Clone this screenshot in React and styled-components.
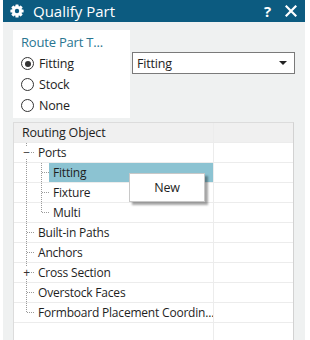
import React from 'react';
import styled, { createGlobalStyle } from 'styled-components';

const GlobalStyle = createGlobalStyle`
	body {
		margin: 0;
		background: #ffffff;
		font-family: "Open Sans", "Noto Sans", sans-serif;
		font-size: 12px;
		letter-spacing: -0.2px;
		color: #1e1e1e;
	}
`;

const treeRows = [
	{ label: 'Ports', guides: ['tee'], expander: '−' },
	{ label: 'Fitting', guides: ['pipe', 'tee'], selected: true },
	{ label: 'Fixture', guides: ['pipe', 'tee'] },
	{ label: 'Multi', guides: ['pipe', 'elbow'] },
	{ label: 'Built-in Paths', guides: ['tee'] },
	{ label: 'Anchors', guides: ['tee'] },
	{ label: 'Cross Section', guides: ['tee'], expander: '+' },
	{ label: 'Overstock Faces', guides: ['tee'] },
	{ label: 'Formboard Placement Coordin...', guides: ['elbow'] },
	{ label: '', guides: [] },
];

const Window = styled.div`
	margin-left: 3px;
	width: 302px;
	height: 340px;
	background: #eff1f1;
	overflow: hidden;
`;

const TitleBar = styled.div`
	height: 22px;
	background: #0c5b80;
	display: flex;
	align-items: center;
	padding: 0 8px 0 7px;
	color: #ffffff;
`;

const Title = styled.div`
	flex: 1;
	margin-left: 9px;
	font-size: 15px;
	letter-spacing: 0;
	line-height: 22px;
`;

const HelpMark = styled.span`
	font-size: 15px;
	font-weight: 700;
	margin-right: 14px;
`;

const Body = styled.div`
	padding: 8px 0 0 10px;
`;

const TopSection = styled.div`
	display: flex;
	align-items: flex-start;
`;

const Group = styled.div`
	width: 117px;
	height: 88px;
	background: #ffffff;
	padding: 3px 0 0 8px;
	box-sizing: border-box;
`;

const GroupTitle = styled.div`
	color: #2a7591;
	font-size: 13px;
	line-height: 18px;
	margin-bottom: 2px;
`;

const RadioRow = styled.div`
	display: flex;
	align-items: center;
	height: 21px;
	gap: 5px;
	font-size: 12.5px;
`;

const Radio = styled.span`
	width: 11px;
	height: 11px;
	border: 1px solid #333333;
	border-radius: 50%;
	display: flex;
	align-items: center;
	justify-content: center;
	background: #ffffff;

	&::after {
		content: '';
		width: 6px;
		height: 6px;
		border-radius: 50%;
		background: ${p => (p.$checked ? '#333333' : 'transparent')};
	}
`;

const Select = styled.div`
	margin: 22px 0 0 2px;
	width: 163px;
	height: 22px;
	box-sizing: border-box;
	border: 1px solid #7a7a7a;
	background: #ffffff;
	display: flex;
	align-items: center;
	padding: 0 7px 0 4px;
	font-size: 12.5px;
`;

const SelectText = styled.span`
	flex: 1;
`;

const Caret = styled.span`
	width: 0;
	height: 0;
	border-left: 4px solid transparent;
	border-right: 4px solid transparent;
	border-top: 4px solid #222222;
`;

const Tree = styled.div`
	position: relative;
	margin-top: 4px;
	width: 281px;
	background: #ffffff;
	border: 1px solid #dcdcdc;
	border-right-color: #d2d2d2;
	box-sizing: border-box;
`;

const Row = styled.div`
	display: grid;
	grid-template-columns: 199px 1fr;
	height: 20px;
	box-sizing: border-box;
	border-bottom: 1px solid #ececec;
	background: ${p => (p.$header ? '#f0f0f0' : '#ffffff')};
`;

const HeaderCell = styled.div`
	padding-left: 8px;
	line-height: 19px;
	font-size: 12.5px;
`;

const NameCell = styled.div`
	display: flex;
	align-items: stretch;
	padding-left: 5px;
`;

const SideCell = styled.div`
	border-left: 1px solid #ececec;
`;

const Guide = styled.span`
	position: relative;
	width: 15px;
	flex-shrink: 0;

	&::before {
		content: '';
		display: ${p => (p.$kind ? 'block' : 'none')};
		position: absolute;
		left: 7px;
		top: 0;
		width: 1px;
		height: ${p => (p.$kind === 'elbow' ? '10px' : '20px')};
		background-image: linear-gradient(to bottom, #9a9a9a 50%, transparent 50%);
		background-size: 1px 2px;
	}

	&::after {
		content: '';
		display: ${p => (p.$kind === 'tee' || p.$kind === 'elbow' ? 'block' : 'none')};
		position: absolute;
		left: 8px;
		top: 9px;
		width: 7px;
		height: 1px;
		background-image: linear-gradient(to right, #9a9a9a 50%, transparent 50%);
		background-size: 2px 1px;
	}
`;

const Expander = styled.span`
	position: absolute;
	z-index: 1;
	left: 3px;
	top: 3px;
	width: 9px;
	height: 13px;
	line-height: 13px;
	text-align: center;
	background: #ffffff;
	font-size: 12px;
	color: #333333;
`;

const Label = styled.span`
	flex: 1;
	padding-left: 4px;
	line-height: 19px;
	font-size: 12px;
	white-space: nowrap;
	overflow: hidden;
	background: ${p => (p.$selected ? '#8cc3d2' : 'transparent')};
`;

const Menu = styled.div`
	position: absolute;
	left: 115px;
	top: 50px;
	width: 76px;
	height: 29px;
	box-sizing: border-box;
	background: #ffffff;
	border: 1px solid #c8c8c8;
	box-shadow: 3px 3px 2px rgba(0, 0, 0, 0.35);
	display: flex;
	align-items: center;
	justify-content: center;
	font-size: 12.5px;
`;

const Gear = () => (
	<svg width="14" height="14" viewBox="0 0 14 14">
		{[0, 45, 90, 135].map(a => (
			<rect key={a} x="5.4" y="0.4" width="3.2" height="13.2" rx="0.6" fill="#ffffff" transform={`rotate(${a} 7 7)`} />
		))}
		<circle cx="7" cy="7" r="5" fill="#ffffff" />
		<circle cx="7" cy="7" r="2.2" fill="#0c5b80" />
	</svg>
);

const CloseIcon = () => (
	<svg width="12" height="12" viewBox="0 0 12 12">
		<path d="M1.5 1.5 L10.5 10.5 M10.5 1.5 L1.5 10.5" stroke="#ffffff" strokeWidth="2.2" strokeLinecap="square" />
	</svg>
);

export default function App() {
	return (
		<>
			<GlobalStyle />
			<Window>
				<TitleBar>
					<Gear />
					<Title>Qualify Part</Title>
					<HelpMark>?</HelpMark>
					<CloseIcon />
				</TitleBar>
				<Body>
					<TopSection>
						<Group>
							<GroupTitle>Route Part T...</GroupTitle>
							<RadioRow><Radio $checked />Fitting</RadioRow>
							<RadioRow><Radio />Stock</RadioRow>
							<RadioRow><Radio />None</RadioRow>
						</Group>
						<Select>
							<SelectText>Fitting</SelectText>
							<Caret />
						</Select>
					</TopSection>
					<Tree>
						<Row $header>
							<HeaderCell>Routing Object</HeaderCell>
							<SideCell />
						</Row>
						{treeRows.map((r, i) => (
							<Row key={i}>
								<NameCell>
									{r.guides.map((g, j) => (
										<Guide key={j} $kind={g}>
											{r.expander && j === r.guides.length - 1 && <Expander>{r.expander}</Expander>}
										</Guide>
									))}
									<Label $selected={r.selected}>{r.label}</Label>
								</NameCell>
								<SideCell />
							</Row>
						))}
						<Menu>New</Menu>
					</Tree>
				</Body>
			</Window>
		</>
	);
}
